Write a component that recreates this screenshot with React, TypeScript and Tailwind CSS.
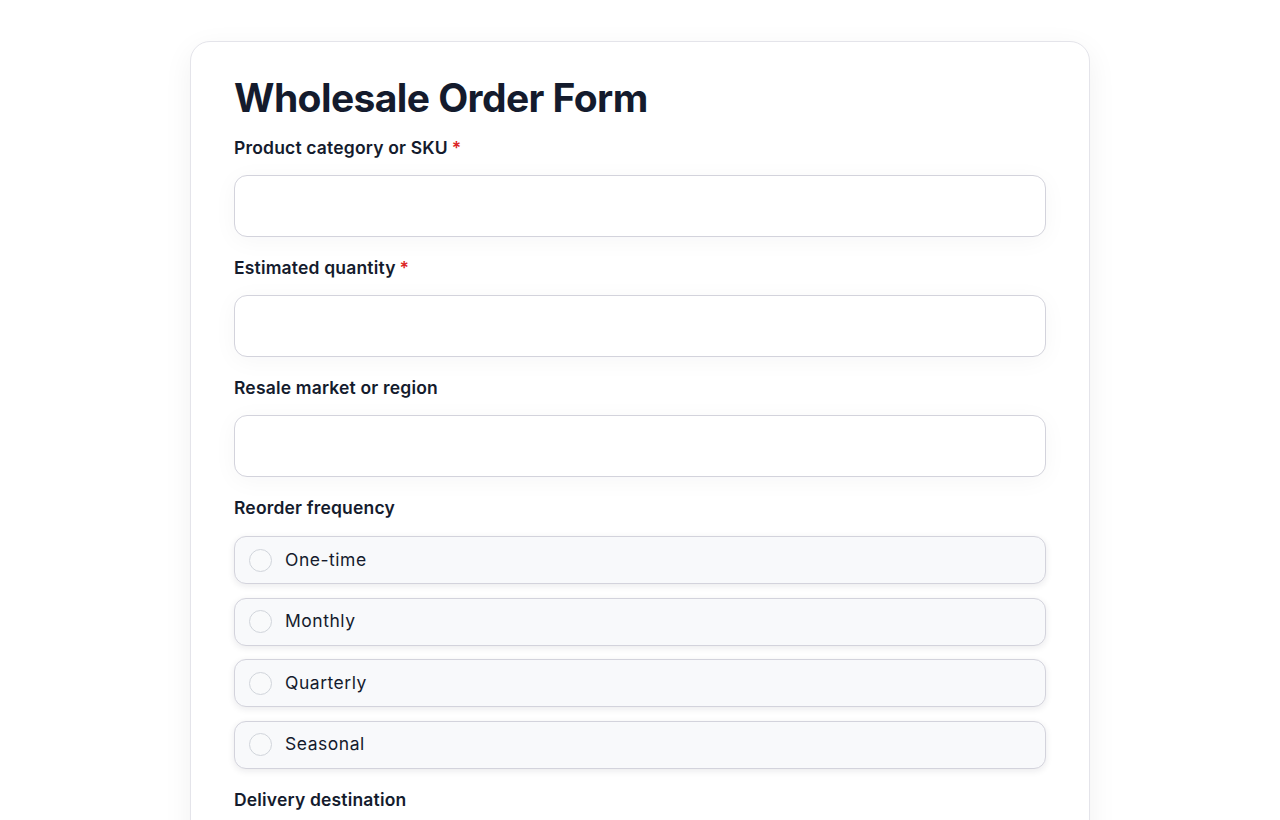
import { useState } from 'react';

const frequencies = ['One-time', 'Monthly', 'Quarterly', 'Seasonal'];

function Label({ text, required }: { text: string; required?: boolean }) {
  return (
    <label className="mb-[15px] block text-[17.5px] leading-6 font-semibold tracking-[0.01em] text-[#141b2d]">
      {text}
      {required && <span className="ml-1 text-[#dc2626]">*</span>}
    </label>
  );
}

function TextField({ label, required }: { label: string; required?: boolean }) {
  return (
    <div className="mb-[19px]">
      <Label text={label} required={required} />
      <input
        type="text"
        className="block h-[62px] w-full rounded-[13px] border border-[#d3d3dc] bg-white px-4 text-[17px] text-[#141b2d] shadow-[0_4px_24px_rgba(17,24,39,0.04)] outline-none"
      />
    </div>
  );
}

export default function App() {
  const [freq, setFreq] = useState<string | null>(null);

  return (
    <div
      className="min-h-screen bg-white pt-[41px]"
      style={{ fontFamily: 'Inter, "Noto Sans", sans-serif' }}
    >
      <div className="mx-auto w-[900px] rounded-[20px] border border-[#e4e4ea] bg-white px-[43px] pt-[32px] pb-10 shadow-[0_8px_30px_rgba(17,24,39,0.06)]">
        <h1 className="mb-[14px] text-[39px] leading-[48px] font-bold tracking-[-0.015em] text-[#141b2d]">
          Wholesale Order Form
        </h1>

        <TextField label="Product category or SKU" required />
        <TextField label="Estimated quantity" required />
        <TextField label="Resale market or region" />

        <div className="mb-[19px]">
          <div className="mb-[16px] text-[17.5px] leading-6 font-semibold tracking-[0.01em] text-[#141b2d]">
            Reorder frequency
          </div>
          <div className="flex flex-col gap-[13.5px]">
            {frequencies.map((f) => (
              <button
                key={f}
                type="button"
                onClick={() => setFreq(f)}
                className="flex h-[48px] w-full items-center rounded-[12px] border border-[#d3d3dc] bg-[#f8f9fb] pl-[14px] text-left shadow-[0_2px_7px_rgba(17,24,39,0.09)]"
              >
                <span className="flex h-[23px] w-[23px] items-center justify-center rounded-full border border-[#d1d5db] bg-[#f9fafb]">
                  {freq === f && <span className="h-[11px] w-[11px] rounded-full bg-[#141b2d]" />}
                </span>
                <span className="ml-[13px] text-[17.5px] tracking-[0.03em] text-[#141b2d]">{f}</span>
              </button>
            ))}
          </div>
        </div>

        <div className="text-[17.5px] leading-6 font-semibold tracking-[0.01em] text-[#141b2d]">
          Delivery destination
        </div>
        <div className="h-[200px]" />
      </div>
    </div>
  );
}
